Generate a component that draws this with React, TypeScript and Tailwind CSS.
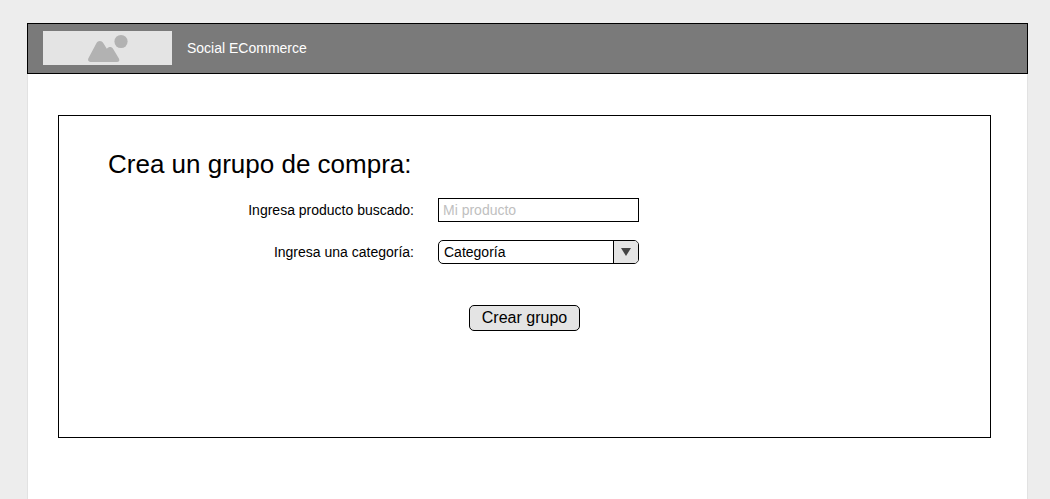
import React from "react";

function LogoPlaceholder() {
  return (
    <div className="flex h-[34px] w-[129px] shrink-0 items-center justify-center bg-[#e4e4e4]">
      <svg width="42" height="30" viewBox="0 0 42 30" fill="#b2b2b2" role="img" aria-label="Logo">
        <circle cx="34" cy="8.5" r="6.6" />
        <path d="M1.4 25.2 C4 20.5 6.5 15.5 9.4 10.2 C11 7.4 14.6 7.4 16.4 10.2 L19.8 15.8 C21.6 13.4 24.6 13.4 26.2 16 L31.9 25.6 C33 27.6 32 29 30 29 L4.6 29 C1.8 29 .4 27.5 1.4 25.2 Z" />
      </svg>
    </div>
  );
}

function Header() {
  return (
    <header className="flex h-[51px] items-center gap-[15px] border border-black bg-[#7a7a7a] px-[15px] pb-px">
      <LogoPlaceholder />
      <span className="text-sm text-white">Social ECommerce</span>
    </header>
  );
}

function GroupForm() {
  return (
    <form className="mt-[17px]" onSubmit={(event) => event.preventDefault()}>
      <div className="grid grid-cols-[306px_201px] items-center gap-x-6 gap-y-[18px] text-sm">
        <label htmlFor="product" className="text-right">
          Ingresa producto buscado:
        </label>
        <input
          id="product"
          type="text"
          placeholder="Mi producto"
          className="h-6 w-full border border-black bg-white px-1 placeholder:text-[#c0c0c0]"
        />
        <label htmlFor="category" className="text-right">
          Ingresa una categoría:
        </label>
        <div className="relative">
          <select
            id="category"
            className="block h-6 w-full appearance-none rounded-[5px] border border-black bg-white pr-7 pl-[5px]"
          >
            <option>Categoría</option>
          </select>
          <span className="pointer-events-none absolute inset-y-px right-px flex w-[25px] items-center justify-center rounded-r-[4px] border-l border-black bg-[#e4e4e4]">
            <svg width="10" height="8" viewBox="0 0 10 8" fill="#444444" aria-hidden="true">
              <path d="M0 0 H10 L5 8 Z" />
            </svg>
          </span>
        </div>
        <div className="col-start-2 mt-[23px] pl-[31px]">
          <button
            type="submit"
            className="block h-[26px] w-[111px] rounded-[5px] border border-black bg-[#e4e4e4] text-base leading-6"
          >
            Crear grupo
          </button>
        </div>
      </div>
    </form>
  );
}

export default function App() {
  return (
    <div className="flex min-h-screen flex-col bg-[#ededed] pt-[23px] pr-[22px] pl-[27px] font-['Liberation_Sans',Arial,sans-serif] text-black">
      <Header />
      <main className="flex-1 border-x border-[#e2e2e2] bg-white px-[30px] pt-[41px] pb-[61px]">
        <section className="mr-[6px] min-h-[323px] border border-black px-[49px] pt-[31px] pb-10">
          <h1 className="text-[26px] leading-[34px]">Crea un grupo de compra:</h1>
          <GroupForm />
        </section>
      </main>
    </div>
  );
}
